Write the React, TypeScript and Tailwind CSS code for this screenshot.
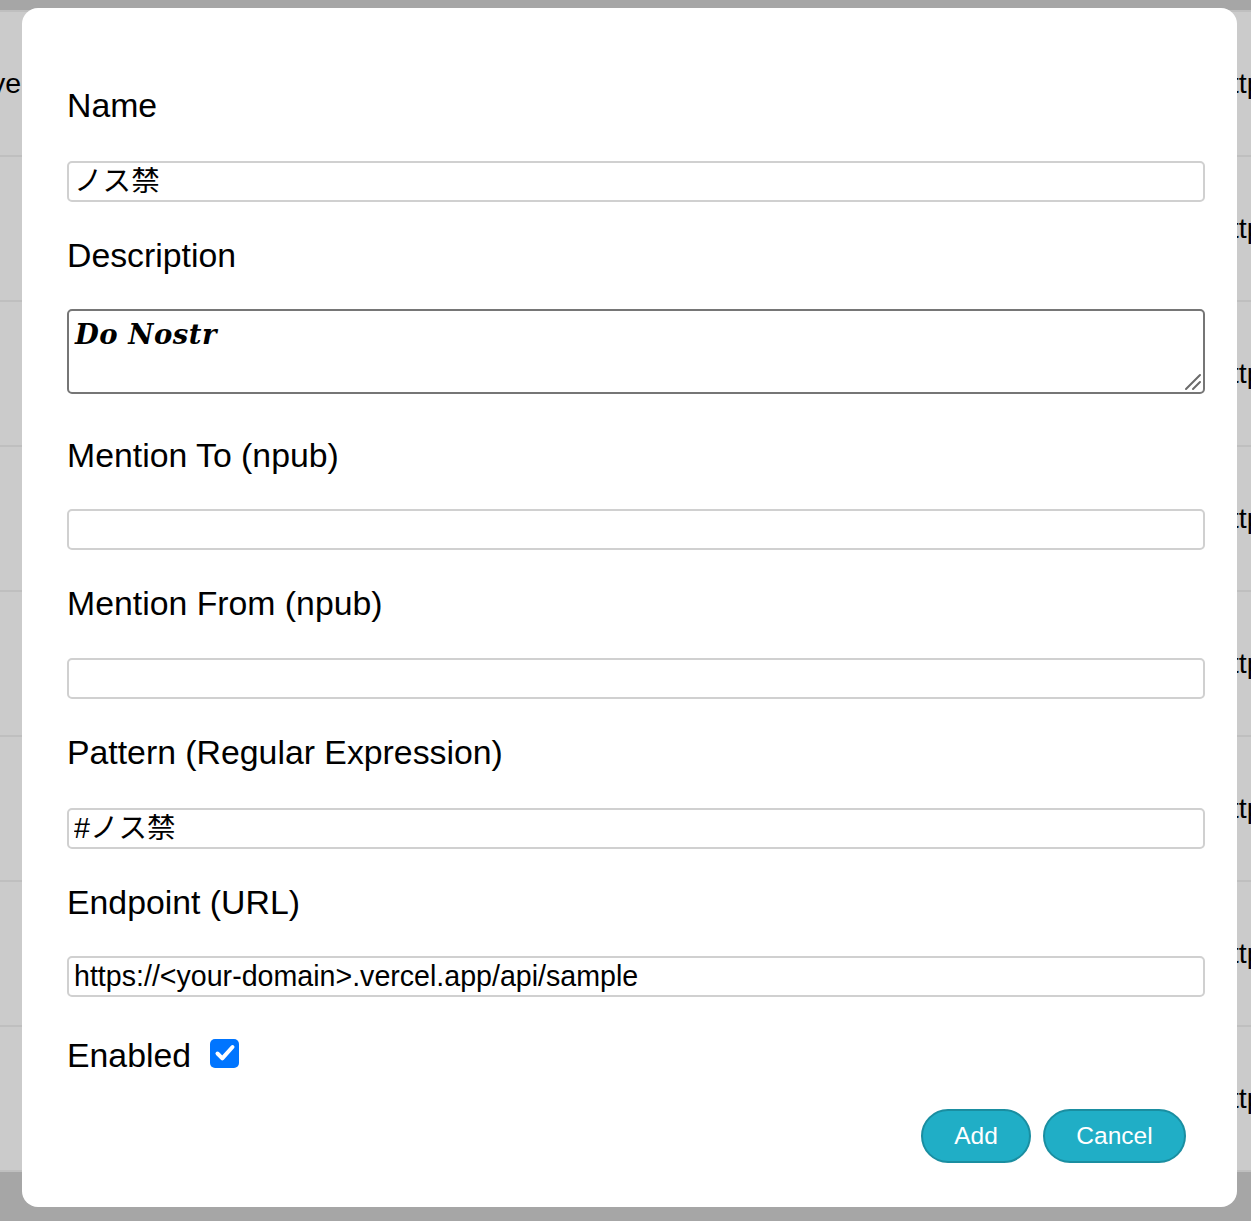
import { useState } from "react";

const ROW_COUNT = 8;

const labelClass = "h-[40px] text-[33.8px] leading-[40px] text-black";
const inputClass =
  "block h-[41px] w-full rounded-[5px] border-2 border-[#d0d0d0] bg-white px-[5px] text-[28.6px] text-black outline-none font-['Liberation_Sans','Noto_Sans_CJK_JP',sans-serif]";

function BackgroundTable() {
  return (
    <div className="pt-[10px]">
      <div className="border-t-2 border-[#bfbfbf] bg-[#cbcbcb]">
        {Array.from({ length: ROW_COUNT }).map((_, i) => (
          <div
            key={i}
            className="flex h-[145px] items-center border-b-2 border-[#bfbfbf] text-[28.5px] text-black"
          >
            <div className="w-[1215px] shrink-0">
              {i === 0 && <span className="-ml-[9px]">ve</span>}
            </div>
            <div className="whitespace-nowrap">https://example.vercel.app/api/sample</div>
          </div>
        ))}
      </div>
    </div>
  );
}

export default function App() {
  const [name, setName] = useState("ノス禁");
  const [description, setDescription] = useState("Do Nostr");
  const [mentionTo, setMentionTo] = useState("");
  const [mentionFrom, setMentionFrom] = useState("");
  const [pattern, setPattern] = useState("#ノス禁");
  const [endpoint, setEndpoint] = useState("https://<your-domain>.vercel.app/api/sample");
  const [enabled, setEnabled] = useState(true);

  return (
    <div className="relative h-[1221px] w-[1251px] overflow-hidden bg-[#a6a6a6] font-['Liberation_Sans',Arial,sans-serif]">
      <BackgroundTable />

      <div className="absolute left-[22px] top-[8px] h-[1199px] w-[1215px] rounded-[16px] bg-white pl-[45px] pr-[32px] pt-[77px]">
        <div className={labelClass}>Name</div>
        <input
          className={`mt-[36px] ${inputClass}`}
          value={name}
          onChange={(e) => setName(e.target.value)}
        />

        <div className={`mt-[33px] ${labelClass}`}>Description</div>
        <div className="relative mt-[34px]">
          <textarea
            className="block h-[85px] w-full resize-none whitespace-pre rounded-[5px] border-2 border-[#767676] bg-white px-[6px] py-[5px] text-[27.5px] font-bold italic leading-[36px] tracking-[0.5px] text-black outline-none font-['DejaVu_Serif',serif]"
            value={description}
            onChange={(e) => setDescription(e.target.value)}
          />
          {/* resize grip */}
          <svg
            viewBox="0 0 20 20"
            className="pointer-events-none absolute bottom-[3px] right-[3px] h-[20px] w-[20px]"
          >
            <path d="M4 18L18 4M11 18L18 11" stroke="#6b6b6b" strokeWidth="2" strokeLinecap="round" />
          </svg>
        </div>

        <div className={`mt-[41px] ${labelClass}`}>Mention To (npub)</div>
        <input
          className={`mt-[34px] ${inputClass}`}
          value={mentionTo}
          onChange={(e) => setMentionTo(e.target.value)}
        />

        <div className={`mt-[33px] ${labelClass}`}>Mention From (npub)</div>
        <input
          className={`mt-[35px] ${inputClass}`}
          value={mentionFrom}
          onChange={(e) => setMentionFrom(e.target.value)}
        />

        <div className={`mt-[33px] ${labelClass}`}>Pattern (Regular Expression)</div>
        <input
          className={`mt-[36px] ${inputClass}`}
          value={pattern}
          onChange={(e) => setPattern(e.target.value)}
        />

        <div className={`mt-[33px] ${labelClass}`}>Endpoint (URL)</div>
        <input
          className={`mt-[34px] ${inputClass}`}
          value={endpoint}
          onChange={(e) => setEndpoint(e.target.value)}
        />

        <div className="mt-[38px] flex h-[40px] items-center">
          <span className="text-[33.8px] leading-[40px] text-black">Enabled</span>
          <button
            type="button"
            onClick={() => setEnabled(!enabled)}
            className={`ml-[19px] -mt-[4px] flex h-[29px] w-[29px] items-center justify-center rounded-[5px] ${
              enabled ? "bg-[#0075ff]" : "border-2 border-[#767676] bg-white"
            }`}
          >
            {enabled && (
              <svg viewBox="0 0 24 24" className="h-[24px] w-[24px]">
                <path
                  d="M4.5 12.5l4.8 4.8L19.5 6"
                  fill="none"
                  stroke="white"
                  strokeWidth="4"
                  strokeLinecap="round"
                  strokeLinejoin="round"
                />
              </svg>
            )}
          </button>
        </div>

        <div className="mt-[34px] flex justify-end gap-[12px] pr-[19px]">
          <button
            type="button"
            className="h-[54px] w-[110px] rounded-full border-2 border-[#1a8ea1] bg-[#20aec6] text-[24.5px] text-white"
          >
            Add
          </button>
          <button
            type="button"
            className="h-[54px] w-[143px] rounded-full border-2 border-[#1a8ea1] bg-[#20aec6] text-[24.5px] text-white"
          >
            Cancel
          </button>
        </div>
      </div>
    </div>
  );
}
